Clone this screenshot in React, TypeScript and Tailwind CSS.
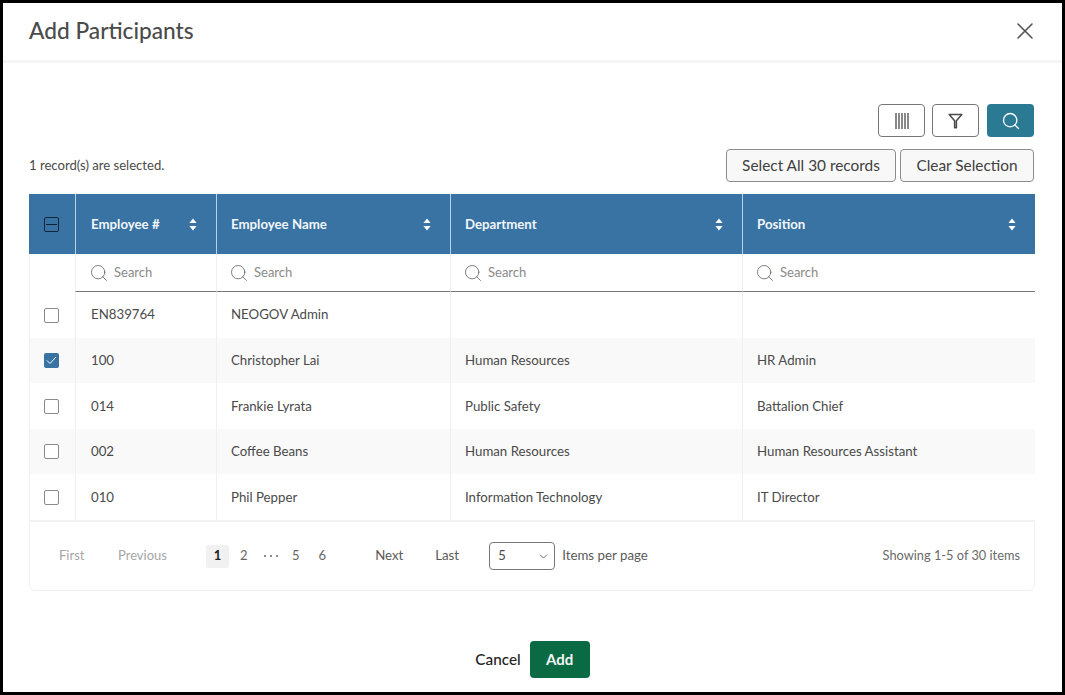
import { ChevronDown, Search, X } from "lucide-react";

const columns = ["Employee #", "Employee Name", "Department", "Position"];

const rows = [
  { id: "EN839764", name: "NEOGOV Admin", dept: "", pos: "", h: "h-[46px]", text: "" },
  { id: "100", name: "Christopher Lai", dept: "Human Resources", pos: "HR Admin", h: "h-[45px]", text: "", checked: true },
  { id: "014", name: "Frankie Lyrata", dept: "Public Safety", pos: "Battalion Chief", h: "h-[46px]", text: "pt-[2px]" },
  { id: "002", name: "Coffee Beans", dept: "Human Resources", pos: "Human Resources Assistant", h: "h-[45px]", text: "" },
  { id: "010", name: "Phil Pepper", dept: "Information Technology", pos: "IT Director", h: "h-[46px]", text: "pt-[2px]" },
];

const gridCols = "grid grid-cols-[46px_141px_234px_292px_293px]";

function SortIcon() {
  return (
    <svg width="8" height="13" viewBox="0 0 8 13" fill="white">
      <path d="M4 0.5 L7.6 5 H0.4 Z" />
      <path d="M4 12.5 L7.6 8 H0.4 Z" />
    </svg>
  );
}

function BarsIcon() {
  return (
    <svg width="14" height="16" viewBox="0 0 14 16" fill="none" stroke="#4a4a4a" strokeWidth="1.3">
      <path d="M1 0V16M4 0V16M7 0V16M10 0V16M13 0V16" />
    </svg>
  );
}

function FunnelIcon() {
  return (
    <svg width="15" height="16" viewBox="0 0 15 16" fill="none" stroke="#4a4a4a" strokeWidth="1.5" strokeLinejoin="round">
      <path d="M1.2 1.4H13.8L8.4 7.8V14.8H6.6V7.8Z" />
    </svg>
  );
}

function CheckBox({ checked }: { checked?: boolean }) {
  if (checked) {
    return (
      <span className="flex h-[15px] w-[15px] items-center justify-center rounded-[2px] bg-[#3873a3]">
        <svg width="11" height="9" viewBox="0 0 11 9" fill="none" stroke="white" strokeWidth="1">
          <path d="M1 4.5L4 7.5L10 1" />
        </svg>
      </span>
    );
  }
  return <span className="h-[15px] w-[15px] rounded-[2px] border border-[#8a8a8a] bg-white" />;
}

export default function App() {
  return (
    <div className="flex h-[695px] w-[1065px] flex-col border-[3px] border-black bg-white font-['Lato',sans-serif] text-[#4a4a4a]">
      <div className="flex h-[60px] shrink-0 items-center justify-between border-b-[3px] border-[#f5f5f5] pb-[1px] pl-[26px] pr-[23px]">
        <h1 className="text-[22.7px] font-medium leading-none text-[#4b4b4b]">Add Participants</h1>
        <X size={28} strokeWidth={1.4} className="text-[#555]" />
      </div>

      <div className="flex flex-1 flex-col pl-[26px] pr-[28px]">
        <div className="mt-[41px] flex justify-end gap-[7px]">
          <button className="flex h-[33px] w-[47px] items-center justify-center rounded-[4px] border border-[#777] bg-white">
            <BarsIcon />
          </button>
          <button className="mr-px flex h-[33px] w-[47px] items-center justify-center rounded-[4px] border border-[#777] bg-white">
            <FunnelIcon />
          </button>
          <button className="flex h-[33px] w-[47px] items-center justify-center rounded-[4px] bg-[#2b7a94]">
            <Search size={20} strokeWidth={1.6} className="text-white" />
          </button>
        </div>

        <div className="mt-[12px] flex items-center justify-between">
          <span className="text-[13.1px] text-[#4a4a4a]">1 record(s) are selected.</span>
          <div className="flex gap-[4px]">
            <button className="h-[33px] w-[170px] rounded-[4px] border border-[#8c8c8c] bg-[#f8f8f8] text-[15.4px] text-[#3f3f3f]">
              Select All 30 records
            </button>
            <button className="h-[33px] w-[134px] rounded-[4px] border border-[#8c8c8c] bg-[#f8f8f8] text-[15.4px] text-[#3f3f3f]">
              Clear Selection
            </button>
          </div>
        </div>

        <div className="mt-[12px] w-[1006px]">
          <div className={`${gridCols} h-[60px] bg-[#3873a3] text-[13.25px] font-bold text-[#f2f6fa]`}>
            <div className="flex items-center pl-[15px]">
              <span className="flex h-[15px] w-[15px] items-center justify-center rounded-[2px] border border-[#12263a] bg-[#3873a3]">
                <span className="h-px w-[11px] bg-[#0e2233]" />
              </span>
            </div>
            {columns.map((c, i) => (
              <div key={c} className={`flex items-center justify-between border-l border-[#b5d3e6] pr-[19px] ${i === 0 ? "pl-[15px]" : "pl-[14px]"}`}>
                <span className="pt-[2px]">{c}</span>
                <SortIcon />
              </div>
            ))}
          </div>

          <div className={`${gridCols} h-[38px]`}>
            <div className="border-l border-[#efefef]" />
            {columns.map((c, i) => (
              <div
                key={c}
                className={`flex items-center gap-[5px] border-b border-l border-b-[#777] border-l-[#efefef] text-[13px] text-[#8a8a8a] ${i === 0 ? "pl-[13px]" : "pl-[12px]"}`}
              >
                <Search size={20} strokeWidth={0.9} className="text-[#555]" />
                <span>Search</span>
              </div>
            ))}
          </div>

          {rows.map((r, i) => (
            <div key={r.id} className={`${gridCols} ${r.h} text-[13.25px] text-[#4a4a4a] ${i % 2 === 1 ? "bg-[#f9f9f9]" : "bg-white"}`}>
              <div className="flex items-center border-l border-[#efefef] pl-[14px]">
                <CheckBox checked={r.checked} />
              </div>
              {[r.id, r.name, r.dept, r.pos].map((v, j) => (
                <div key={j} className={`flex items-center border-l border-[#efefef] ${r.text} ${j === 0 ? "pl-[15px]" : "pl-[14px]"}`}>
                  {v}
                </div>
              ))}
            </div>
          ))}

          <div className="flex h-[71px] items-center rounded-b-[6px] border border-t-2 border-[#f1f1f1] pl-[29px] pr-[14px] text-[13px]">
            <span className="w-[59px] text-[#a6a6a6]">First</span>
            <span className="w-[88px] text-[#a6a6a6]">Previous</span>
            <span className="flex h-[23px] w-[23px] items-center justify-center rounded-[2px] bg-[#f1f1f1] font-bold text-[#222]">1</span>
            <span className="ml-[11px] text-[#666]">2</span>
            <span className="ml-[16px] flex gap-[3.5px]">
              <span className="h-[2.5px] w-[2.5px] rounded-full bg-[#666]" />
              <span className="h-[2.5px] w-[2.5px] rounded-full bg-[#666]" />
              <span className="h-[2.5px] w-[2.5px] rounded-full bg-[#666]" />
            </span>
            <span className="ml-[14px] text-[#666]">5</span>
            <span className="ml-[19px] text-[#666]">6</span>
            <span className="ml-[49px] w-[60px] text-[13.25px] text-[#5a5a5a]">Next</span>
            <span className="w-[54px] text-[13.25px] text-[#5a5a5a]">Last</span>
            <div className="flex h-[28px] w-[66px] items-center justify-between rounded-[4px] border border-[#777] pl-[8px] pr-[4px] text-[#4a4a4a]">
              <span>5</span>
              <ChevronDown size={13} strokeWidth={1.4} />
            </div>
            <span className="ml-[7px] text-[13.3px] text-[#5a5a5a]">Items per page</span>
            <span className="ml-auto text-[12.8px] text-[#6a6a6a]">Showing 1-5 of 30 items</span>
          </div>
        </div>

        <div className="ml-[2px] mt-[50px] flex items-center justify-center gap-[9px]">
          <span className="text-[15.3px] font-medium text-[#222]">Cancel</span>
          <button className="h-[37px] w-[60px] rounded-[4px] bg-[#0a6a43] text-[15px] font-bold text-[#f2f7f4]">Add</button>
        </div>
      </div>
    </div>
  );
}
